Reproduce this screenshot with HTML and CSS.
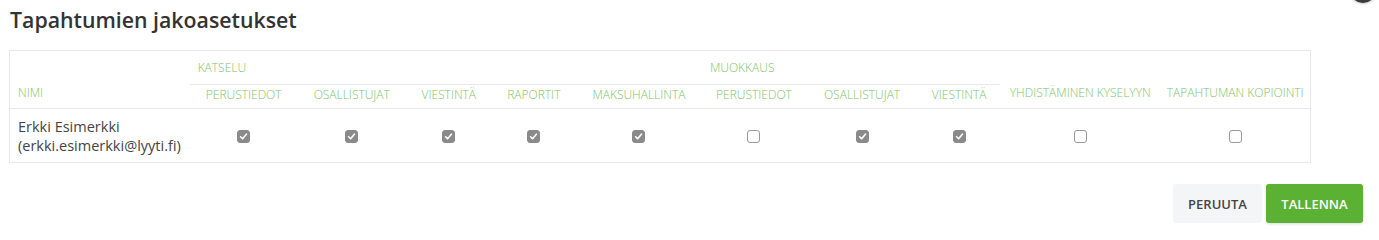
FILE: index.html
```html
<!DOCTYPE html>
<html lang="fi">
<head>
<meta charset="utf-8">
<title>Tapahtumien jakoasetukset</title>
<link rel="stylesheet" href="styles.css">
</head>
<body>
<span class="close-knob"></span>
<h1 class="title">Tapahtumien jakoasetukset</h1>
<table class="share-table">
  <colgroup>
    <col style="width:180px"><col style="width:108px"><col style="width:108px"><col style="width:86px"><col style="width:84px"><col style="width:126px"><col style="width:104px"><col style="width:112px"><col style="width:82px"><col style="width:160px"><col style="width:150px">
  </colgroup>
  <thead>
    <tr class="group-row">
      <th class="th-name" rowspan="2">NIMI</th>
      <th class="th-group" colspan="5">KATSELU</th>
      <th class="th-group" colspan="3">MUOKKAUS</th>
      <th class="th-sub th-tall" rowspan="2">YHDISTÄMINEN KYSELYYN</th>
      <th class="th-sub th-tall" rowspan="2">TAPAHTUMAN KOPIOINTI</th>
    </tr>
    <tr class="sub-row">
      <th class="th-sub">PERUSTIEDOT</th>
      <th class="th-sub">OSALLISTUJAT</th>
      <th class="th-sub">VIESTINTÄ</th>
      <th class="th-sub">RAPORTIT</th>
      <th class="th-sub">MAKSUHALLINTA</th>
      <th class="th-sub">PERUSTIEDOT</th>
      <th class="th-sub">OSALLISTUJAT</th>
      <th class="th-sub">VIESTINTÄ</th>
    </tr>
  </thead>
  <tbody>
    <tr>
      <td class="td-name">Erkki Esimerkki<br>(erkki.esimerkki@lyyti.fi)</td>
      <td class="td-check"><span class="cb cb-on"><svg viewBox="0 0 13 13"><path d="M3.6 6.8 L5.6 8.8 L9.4 4.2" /></svg></span></td>
      <td class="td-check"><span class="cb cb-on"><svg viewBox="0 0 13 13"><path d="M3.6 6.8 L5.6 8.8 L9.4 4.2" /></svg></span></td>
      <td class="td-check"><span class="cb cb-on"><svg viewBox="0 0 13 13"><path d="M3.6 6.8 L5.6 8.8 L9.4 4.2" /></svg></span></td>
      <td class="td-check"><span class="cb cb-on"><svg viewBox="0 0 13 13"><path d="M3.6 6.8 L5.6 8.8 L9.4 4.2" /></svg></span></td>
      <td class="td-check"><span class="cb cb-on"><svg viewBox="0 0 13 13"><path d="M3.6 6.8 L5.6 8.8 L9.4 4.2" /></svg></span></td>
      <td class="td-check"><span class="cb"></span></td>
      <td class="td-check"><span class="cb cb-on"><svg viewBox="0 0 13 13"><path d="M3.6 6.8 L5.6 8.8 L9.4 4.2" /></svg></span></td>
      <td class="td-check"><span class="cb cb-on"><svg viewBox="0 0 13 13"><path d="M3.6 6.8 L5.6 8.8 L9.4 4.2" /></svg></span></td>
      <td class="td-check"><span class="cb"></span></td>
      <td class="td-check"><span class="cb"></span></td>
    </tr>
  </tbody>
</table>
<div class="actions">
  <button class="btn btn-cancel" type="button">PERUUTA</button>
  <button class="btn btn-save" type="button">TALLENNA</button>
</div>
</body>
</html>
```
FILE: styles.css
```css
html, body {
  margin: 0;
  padding: 0;
  background: #ffffff;
}
body {
  position: relative;
  padding: 0 16px 0 9px;
  font-family: "Open Sans", "Liberation Sans", sans-serif;
  color: #444444;
  overflow: hidden;
  height: 234px;
  box-sizing: border-box;
}
.close-knob {
  position: absolute;
  top: -23px;
  right: 3px;
  width: 26px;
  height: 26px;
  border-radius: 50%;
  background: #3a3a3a;
  box-shadow: 0 0 3px rgba(0,0,0,0.4);
}
.title {
  margin: 0;
  padding: 5px 0 0 1px;
  height: 50px;
  box-sizing: border-box;
  font-size: 21.3px;
  line-height: 30px;
  font-weight: 600;
  color: #333333;
}
.share-table {
  table-layout: fixed;
  width: 1302px;
  border-collapse: collapse;
  border: 1px solid #e8e8e8;
}
.share-table th {
  font-weight: 300;
  font-size: 12px;
  color: #7cc46a;
  text-transform: uppercase;
  white-space: nowrap;
  padding: 0;
}
.group-row th {
  height: 33px;
}
.sub-row th {
  height: 19px;
}
.th-name {
  text-align: left;
  vertical-align: bottom;
  padding: 0 0 7px 8px !important;
  border-bottom: 1px solid #e8e8e8;
}
.th-group {
  text-align: left;
  vertical-align: middle;
  padding: 0 0 0 8px !important;
  border-bottom: 1px solid #e8e8e8;
}
.th-sub {
  text-align: center;
  vertical-align: middle;
  padding-bottom: 4px !important;
  border-bottom: 1px solid #e8e8e8;
}
.th-tall {
  vertical-align: bottom;
  padding-bottom: 7px !important;
}
.share-table td {
  height: 53px;
  padding: 0;
}
.td-name {
  padding-left: 8px !important;
  font-size: 14.5px;
  line-height: 19px;
  color: #444444;
  white-space: nowrap;
}
.td-check {
  text-align: center;
  vertical-align: middle;
}
.cb {
  display: inline-block;
  width: 11px;
  height: 11px;
  border: 1px solid #9a9a9a;
  border-radius: 3px;
  background: #ffffff;
  vertical-align: middle;
  position: relative;
  top: -1px;
}
.cb-on {
  background: #8a8a8a;
  border-color: #8a8a8a;
}
.cb svg {
  display: block;
  width: 13px;
  height: 13px;
  margin: -1px 0 0 -1px;
}
.cb svg path {
  fill: none;
  stroke: #ffffff;
  stroke-width: 1.6;
  stroke-linecap: round;
  stroke-linejoin: round;
}
.actions {
  display: flex;
  justify-content: flex-end;
  gap: 4px;
  margin-top: 21px;
  width: 1354px;
}
.btn {
  height: 39px;
  border: none;
  border-radius: 3px;
  font-family: "Open Sans", "Liberation Sans", sans-serif;
  font-weight: 600;
  font-size: 13px;
  padding: 0;
  cursor: pointer;
}
.btn-cancel {
  width: 89px;
  background: #f4f5f7;
  color: #444444;
}
.btn-save {
  width: 97px;
  background: #5ab134;
  color: #ffffff;
  box-shadow: 0 1px 3px rgba(0,0,0,0.15);
}
```
